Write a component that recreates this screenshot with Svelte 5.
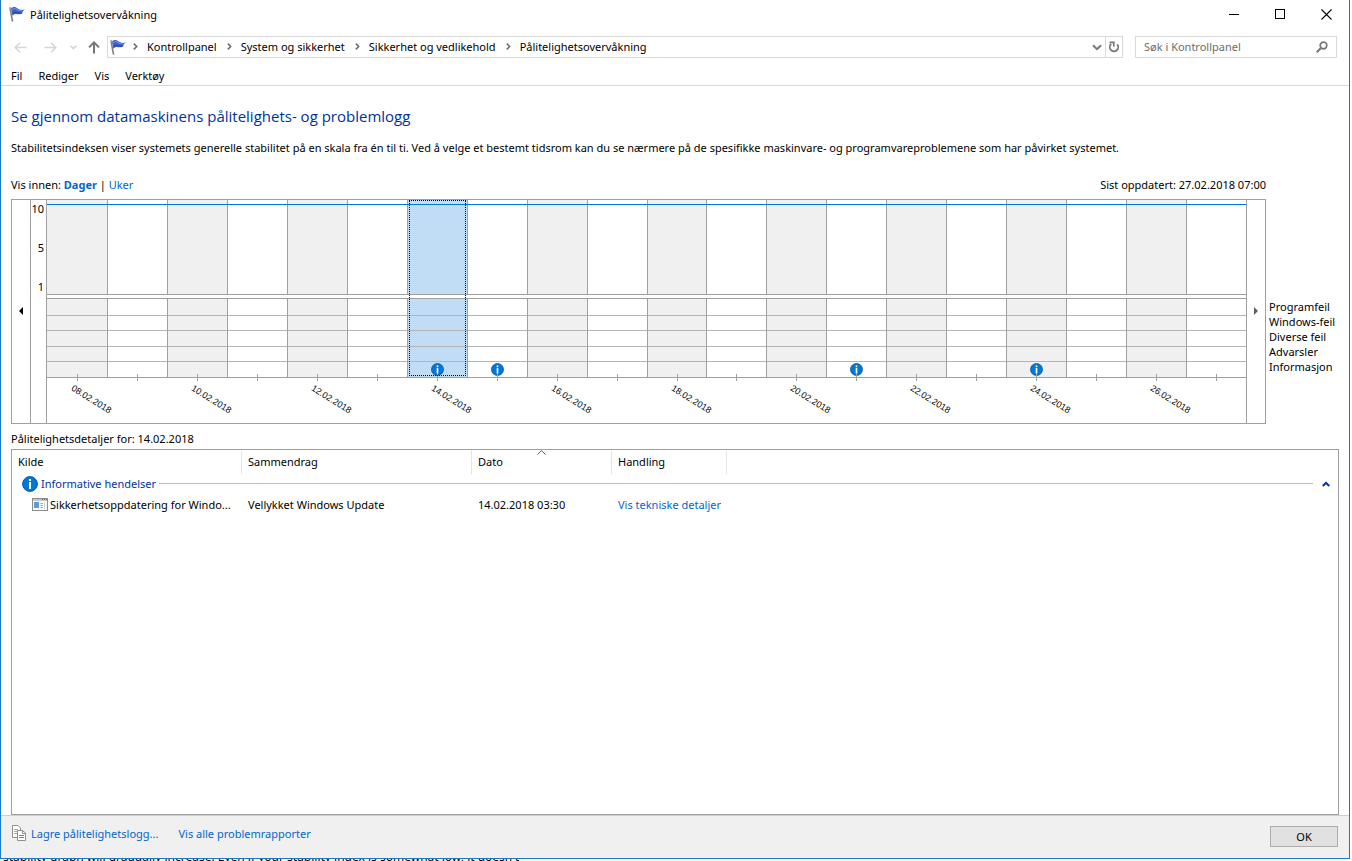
<script lang="ts">
	type Day = { date: string; label: boolean; info: boolean };

	const dayCount = 20;
	const firstDay = 8;
	const infoDays = [14, 15, 21, 24];

	const days: Day[] = Array.from({ length: dayCount }, (_, i) => {
		const day = firstDay + i;
		return {
			date: `${String(day).padStart(2, '0')}.02.2018`,
			label: i % 2 === 0,
			info: infoDays.includes(day)
		};
	});

	const crumbs = ['Kontrollpanel', 'System og sikkerhet', 'Sikkerhet og vedlikehold', 'Pålitelighetsovervåkning'];
	const menus = ['Fil', 'Rediger', 'Vis', 'Verktøy'];
	const categories = ['Programfeil', 'Windows-feil', 'Diverse feil', 'Advarsler', 'Informasjon'];

	let selected = $state('14.02.2018');
	let search = $state('');
	let open = $state(true);
</script>

{#snippet flag()}
	<svg class="flag" width="17" height="17" viewBox="0 0 17 17" aria-hidden="true">
		<path d="M1 2.2 L3.6 15.6" stroke="#77808c" stroke-width="1.6" fill="none" />
		<circle cx="1.2" cy="1.8" r="1" fill="#a9afb8" />
		<path d="M2 2.6 C4.5 0.2 6.5 1 8 2 C9.5 3.4 12 4.4 15.6 3.6 C14 4.8 13.2 6 13.4 7.6 C11 9 8.6 8 7 8 C5.4 8 4.4 8.6 3.4 9.8 Z" fill="#3d5fc9" />
		<path d="M3 4 C5 2 6.5 2.6 8 3.6 C9.5 4.6 11 5 13 4.8" stroke="#7d9cf0" stroke-width="1" fill="none" />
		<path d="M3.6 7.6 C6 5.6 8 7.4 12.6 6.8" stroke="#2742a3" stroke-width="1" fill="none" />
	</svg>
{/snippet}

{#snippet info(size: number)}
	<svg width={size} height={size} viewBox="0 0 16 16" aria-hidden="true">
		<circle cx="8" cy="8" r="7.4" fill="#0078d7" stroke="#0a5aa5" stroke-width="1" />
		<rect x="7" y="3" width="2" height="2" fill="#fff" />
		<rect x="7" y="6" width="2" height="7" fill="#fff" />
	</svg>
{/snippet}

<div class="desktop">
	<div class="window">
		<header class="titlebar">
			{@render flag()}
			<span class="title">Pålitelighetsovervåkning</span>
			<div class="controls">
				<button aria-label="Minimer">
					<svg width="11" height="11" viewBox="0 0 11 11"><path d="M0 5.5H10" stroke="#000" /></svg>
				</button>
				<button aria-label="Maksimer">
					<svg width="11" height="11" viewBox="0 0 11 11"><rect x="0.5" y="0.5" width="9" height="9" fill="none" stroke="#000" /></svg>
				</button>
				<button aria-label="Lukk">
					<svg width="11" height="11" viewBox="0 0 11 11"><path d="M0.5 0.5L10.5 10.5M10.5 0.5L0.5 10.5" stroke="#000" stroke-width="1.1" /></svg>
				</button>
			</div>
		</header>

		<nav class="navbar">
			<div class="history">
				<button aria-label="Tilbake" disabled>
					<svg width="13" height="11" viewBox="0 0 13 11"><path d="M12.5 5.5H1M6 0.8L1.2 5.5L6 10.2" fill="none" stroke="#d6d6d6" stroke-width="1.5" /></svg>
				</button>
				<button aria-label="Fremover" disabled>
					<svg width="13" height="11" viewBox="0 0 13 11"><path d="M0.5 5.5H12M7 0.8L11.8 5.5L7 10.2" fill="none" stroke="#d6d6d6" stroke-width="1.5" /></svg>
				</button>
				<button class="recent" aria-label="Siste plasseringer" disabled>
					<svg width="7" height="5" viewBox="0 0 7 5"><path d="M0.5 0.8L3.5 3.6L6.5 0.8" fill="none" stroke="#cfcfcf" stroke-width="1.4" /></svg>
				</button>
				<button class="up" aria-label="Opp">
					<svg width="12" height="13" viewBox="0 0 12 13"><path d="M6 12.5V1.5M1 6.4L6 1.4L11 6.4" fill="none" stroke="#757575" stroke-width="2" /></svg>
				</button>
			</div>
			<div class="address">
				{@render flag()}
				<ol>
					{#each crumbs as crumb}
						<li>
							<svg width="5" height="7" viewBox="0 0 5 7" aria-hidden="true"><path d="M0.8 0.6L3.7 3.5L0.8 6.4" fill="none" stroke="#6b6b6b" stroke-width="1.5" /></svg>
							<a href="#top">{crumb}</a>
						</li>
					{/each}
				</ol>
				<button class="drop" aria-label="Tidligere plasseringer">
					<svg width="10" height="7" viewBox="0 0 10 7"><path d="M1 1.2L5 5.2L9 1.2" fill="none" stroke="#777" stroke-width="2" /></svg>
				</button>
				<button class="reload" aria-label="Oppdater">
					<svg width="12" height="12" viewBox="0 0 12 12">
						<path d="M9.2 3.4A4.2 4.2 0 1 1 3.2 3" fill="none" stroke="#777" stroke-width="1.8" />
						<path d="M1.6 1.4H5.8V5.6" fill="none" stroke="#777" stroke-width="1.7" />
					</svg>
				</button>
			</div>
			<label class="search">
				<input type="text" placeholder="Søk i Kontrollpanel" aria-label="Søk i Kontrollpanel" bind:value={search} />
				<svg width="12" height="12" viewBox="0 0 12 12" aria-hidden="true">
					<circle cx="7.5" cy="4.5" r="3.3" fill="none" stroke="#777" stroke-width="1.7" />
					<path d="M5.2 6.8L0.8 11.2" stroke="#777" stroke-width="2" />
				</svg>
			</label>
		</nav>

		<div class="menubar">
			{#each menus as menu}
				<button>{menu}</button>
			{/each}
		</div>

		<main>
			<h1>Se gjennom datamaskinens pålitelighets- og problemlogg</h1>
			<p class="intro">
				Stabilitetsindeksen viser systemets generelle stabilitet på en skala fra én til ti. Ved å velge et bestemt tidsrom kan du se nærmere på de spesifikke maskinvare- og programvareproblemene som har påvirket systemet.
			</p>

			<div class="range">
				<span>Vis innen: <a class="current" href="#dager">Dager</a> | <a href="#uker">Uker</a></span>
				<span>Sist oppdatert: 27.02.2018 07:00</span>
			</div>

			<section class="report">
				<div class="chart">
					<button class="scroll" aria-label="Forrige">
						<svg width="4" height="8" viewBox="0 0 4 8"><path d="M4 0V8L0 4Z" fill="#000" /></svg>
					</button>
					<div class="axis">
						<span>10</span>
						<span>5</span>
						<span>1</span>
					</div>
					<div class="plot">
						{#each days as day, i}
							<button
								class="day"
								class:shaded={i % 2 === 0}
								class:selected={day.date === selected}
								aria-label={day.date}
								onclick={() => (selected = day.date)}
							>
								<span class="upper"></span>
								<span class="lower">
									<span></span>
									<span></span>
									<span></span>
									<span></span>
									<span>{#if day.info}{@render info(13)}{/if}</span>
								</span>
								<span class="foot">
									{#if day.label}<span class="date">{day.date}</span>{/if}
								</span>
							</button>
						{/each}
						<div class="stability"></div>
					</div>
					<button class="scroll" aria-label="Neste">
						<svg width="4" height="8" viewBox="0 0 4 8"><path d="M0 0V8L4 4Z" fill="#606060" /></svg>
					</button>
				</div>
				<ul class="categories">
					{#each categories as category}
						<li>{category}</li>
					{/each}
				</ul>
			</section>

			<p class="details">Pålitelighetsdetaljer for: {selected}</p>

			<div class="list">
				<table>
					<colgroup>
						<col class="source" />
						<col class="summary" />
						<col class="when" />
						<col class="action" />
						<col />
					</colgroup>
					<thead>
						<tr>
							<th>Kilde</th>
							<th>Sammendrag</th>
							<th class="sorted">
								<svg width="9" height="5" viewBox="0 0 9 5" aria-hidden="true"><path d="M0.5 4.5L4.5 0.7L8.5 4.5" fill="none" stroke="#5c5c5c" /></svg>
								Dato
							</th>
							<th>Handling</th>
							<td></td>
						</tr>
					</thead>
					<tbody>
						<tr>
							<td class="group" colspan="5">
								<button onclick={() => (open = !open)} aria-expanded={open}>
									{@render info(16)}
									<span>Informative hendelser</span>
									<i></i>
									<svg width="8" height="6" viewBox="0 0 8 6" aria-hidden="true"><path d="M0.8 5L4 1.8L7.2 5" fill="none" stroke="#003399" stroke-width="2" /></svg>
								</button>
							</td>
						</tr>
						{#if open}
							<tr class="event">
								<td>
									<div class="name">
										<svg width="16" height="13" viewBox="0 0 16 13" aria-hidden="true">
											<rect x="0.5" y="0.5" width="15" height="12" fill="#fafafa" stroke="#8c8c8c" />
											<path d="M1 2H15" stroke="#c4c8cc" stroke-width="2" />
											<path d="M10 1.5H11M12 1.5H13M14 1.5H15" stroke="#666" />
											<rect x="2" y="4" width="5" height="6" fill="#5b9bd8" />
											<path d="M8.5 5.5H11M8.5 7.5H11M8.5 9.5H11" stroke="#9aa8b5" />
											<path d="M12.5 4V11" stroke="#c9d3dc" />
										</svg>
										<span>Sikkerhetsoppdatering for Windo...</span>
									</div>
								</td>
								<td>Vellykket Windows Update</td>
								<td>14.02.2018 03:30</td>
								<td><a href="#detaljer">Vis tekniske detaljer</a></td>
								<td></td>
							</tr>
						{/if}
					</tbody>
				</table>
			</div>
		</main>

		<footer>
			<a href="#lagre">
				<svg width="15" height="17" viewBox="0 0 15 17" aria-hidden="true">
					<path d="M0.5 0.5H6L8.5 3V12.5H0.5Z" fill="#fff" stroke="#8f8f8f" />
					<path d="M2 4.5H6M2 6.5H6M2 8.5H6" stroke="#86aede" />
					<path d="M5.5 5.5H10.5L13.5 8V15.5H5.5Z" fill="#fff" stroke="#8f8f8f" />
					<path d="M10.5 5.5V8.5H13.5" fill="none" stroke="#8f8f8f" />
					<path d="M7 10.5H12M7 12.5H12" stroke="#4e8ad0" />
				</svg>
				Lagre pålitelighetslogg...
			</a>
			<a href="#rapporter">Vis alle problemrapporter</a>
			<button>OK</button>
		</footer>
	</div>

	<!-- Page behind the window, only a sliver of one line shows -->
	<p class="behind">stability graph will gradually increase. Even if your stability index is somewhat low, it doesn't</p>
</div>

<style>
	:global(body) {
		margin: 0;
	}

	.desktop {
		height: 100vh;
		display: flex;
		flex-direction: column;
		overflow: hidden;
		background: #fff;
		color: #000;
		font: 11px/15px 'Noto Sans', 'Open Sans', sans-serif;
	}

	.window {
		flex: 1;
		min-height: 0;
		display: flex;
		flex-direction: column;
		margin-right: 2px;
		border: solid #1979ca;
		border-width: 0 1px 1px;
		background: #fff;
	}

	.behind {
		height: 2px;
		display: flex;
		align-items: flex-end;
		margin: 0;
		padding-left: 3px;
		overflow: hidden;
		font-size: 12px;
		line-height: 8px;
		white-space: nowrap;
	}

	button {
		padding: 0;
		border: 0;
		background: none;
		color: inherit;
		font: inherit;
	}

	a {
		color: #0066cc;
		text-decoration: none;
	}

	svg {
		display: block;
		flex: none;
	}

	/* Title bar */
	.titlebar {
		height: 29px;
		display: flex;
		align-items: center;
		gap: 4px;
		padding-left: 8px;
	}

	.controls {
		display: flex;
		align-self: stretch;
		margin-left: auto;
	}

	.controls button {
		width: 46px;
		height: 28px;
		display: grid;
		place-items: center;
	}

	/* Address bar */
	.navbar {
		display: flex;
		align-items: center;
		height: 36px;
		padding-right: 12px;
	}

	.history {
		display: flex;
		align-items: center;
		gap: 17px;
		padding: 0 7px 0 13px;
	}

	.history .recent {
		margin: 0 -6px 0 -4px;
	}

	.address,
	.search {
		box-sizing: border-box;
		height: 22px;
		display: flex;
		align-items: center;
		border: 1px solid #d9d9d9;
	}

	.address {
		flex: 1;
		padding-left: 2px;
	}

	.address ol {
		flex: 1;
		display: flex;
		gap: 10px;
		margin: 0;
		padding: 0 0 2px 6px;
		list-style: none;
	}

	.address li {
		display: flex;
		align-items: center;
		gap: 9px;
	}

	.address a {
		color: #000;
	}

	.drop,
	.reload {
		width: 17px;
		height: 20px;
		display: grid;
		place-items: center;
	}

	.reload {
		border-left: 1px solid #d9d9d9;
	}

	.search {
		width: 202px;
		margin-left: 12px;
		padding: 0 8px;
	}

	.search input {
		flex: 1;
		min-width: 0;
		padding: 0 0 2px;
		border: 0;
		outline: 0;
		font: inherit;
	}

	.search input::placeholder {
		color: #6d6d6d;
		opacity: 1;
	}

	.menubar {
		display: flex;
		gap: 16px;
		padding: 3px 10px 2px;
		border-bottom: 1px solid #d9d9d9;
	}

	/* Content */
	main {
		flex: 1;
		min-height: 0;
		display: flex;
		flex-direction: column;
		padding: 19px 10px 0;
	}

	h1 {
		margin: 0;
		color: #003399;
		font-family: 'Open Sans', 'Noto Sans', sans-serif;
		font-size: 15px;
		font-weight: 400;
		line-height: 22px;
	}

	.intro {
		margin: 13px 0 22px;
		white-space: nowrap;
	}

	.range {
		display: flex;
		justify-content: space-between;
		margin: 0 73px 7px 0;
	}

	.current {
		font-weight: 700;
	}

	.report {
		display: flex;
		gap: 3px;
	}

	.chart {
		box-sizing: border-box;
		flex: 1;
		display: flex;
		height: 225px;
		border: 1px solid #a0a0a0;
	}

	.scroll {
		width: 18px;
		display: grid;
		place-items: center;
		padding-bottom: 2px;
	}

	.axis {
		box-sizing: border-box;
		width: 17px;
		display: flex;
		flex-direction: column;
		gap: 24px;
		padding: 1px 2px 0 0;
		border: solid #a0a0a0;
		border-width: 0 1px;
	}

	.axis span {
		display: flex;
		justify-content: flex-end;
	}

	.plot {
		position: relative;
		flex: 1;
		display: flex;
		border-right: 1px solid #a0a0a0;
	}

	.stability {
		position: absolute;
		top: 4px;
		left: 0;
		right: 0;
		height: 1px;
		background: #0078d7;
	}

	.day {
		position: relative;
		flex: 1;
		min-width: 0;
		display: flex;
		flex-direction: column;
	}

	.upper,
	.lower {
		box-sizing: border-box;
		align-self: stretch;
		border: 0 solid #a0a0a0;
		border-bottom-width: 1px;
	}

	.upper {
		height: 95px;
		margin-bottom: 3px;
	}

	.lower {
		height: 80px;
		display: grid;
		grid-template-rows: repeat(5, 1fr);
		border-top-width: 1px;
	}

	.lower > span {
		display: grid;
		place-items: center;
	}

	.lower > span + span {
		border-top: 1px solid #b4b4b4;
	}

	.day + .day .upper,
	.day + .day .lower {
		border-left-width: 1px;
	}

	.shaded .upper,
	.shaded .lower {
		background: #f0f0f0;
	}

	.selected .upper,
	.selected .lower {
		background: #c0ddf5;
	}

	.selected::after {
		content: '';
		position: absolute;
		top: 0;
		left: 2px;
		right: 1px;
		height: 174px;
		border: 1px dotted #000;
	}

	.foot {
		position: relative;
		align-self: stretch;
		height: 45px;
	}

	.foot::before {
		content: '';
		position: absolute;
		top: -4px;
		left: 50%;
		width: 1px;
		height: 7px;
		background: #a0a0a0;
	}

	/* Slanted so that a full date fits under its column */
	.date {
		position: absolute;
		top: 5px;
		left: 28px;
		font: 9px/10px 'Liberation Sans', sans-serif;
		transform: rotate(32deg);
		transform-origin: 0 0;
	}

	.categories {
		width: 70px;
		margin: 0;
		padding: 100px 0 0;
		list-style: none;
		white-space: nowrap;
	}

	.details {
		margin: 7px 0 3px;
	}

	/* Event list */
	.list {
		flex: 1;
		min-height: 0;
		border: 1px solid #a0a0a0;
	}

	table {
		width: 100%;
		table-layout: fixed;
		border-spacing: 0;
	}

	.source,
	.summary {
		width: 230px;
	}

	.when {
		width: 140px;
	}

	.action {
		width: 115px;
	}

	th,
	td {
		padding: 0 6px;
		font-weight: 400;
		text-align: left;
		white-space: nowrap;
	}

	th {
		position: relative;
		height: 22px;
		padding-bottom: 2px;
		border-right: 1px solid #e5e5e5;
	}

	.sorted svg {
		position: absolute;
		top: 0;
		left: 0;
		right: 0;
		margin: 0 auto;
	}

	.group {
		padding: 0 8px 0 10px;
	}

	.group button {
		width: 100%;
		height: 19px;
		display: flex;
		align-items: center;
		gap: 3px;
		color: #003399;
	}

	.group i {
		flex: 1;
		height: 1px;
		margin-right: 6px;
		background: #b0bfde;
	}

	.event td {
		height: 22px;
	}

	.name {
		display: flex;
		align-items: center;
		gap: 2px;
		padding-left: 14px;
	}

	footer {
		box-sizing: border-box;
		height: 43px;
		display: flex;
		align-items: center;
		gap: 20px;
		padding: 0 11px 8px 11px;
		border-top: 1px solid #cfcfcf;
		background: #f0f0f0;
	}

	footer a {
		display: flex;
		align-items: center;
		gap: 4px;
	}

	footer button {
		box-sizing: border-box;
		width: 68px;
		height: 21px;
		margin: 7px 0 0 auto;
		border: 1px solid #adadad;
		background: #e1e1e1;
	}
</style>
